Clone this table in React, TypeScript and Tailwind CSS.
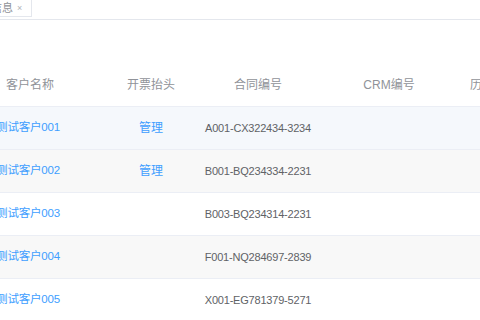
import React from "react";

const rows = [
  { name: "测试客户001", head: "管理", no: "A001-CX322434-3234", bg: "bg-[#f5f8fc]" },
  { name: "测试客户002", head: "管理", no: "B001-BQ234334-2231", bg: "bg-[#f8f8f8]" },
  { name: "测试客户003", head: "", no: "B003-BQ234314-2231", bg: "bg-white" },
  { name: "测试客户004", head: "", no: "F001-NQ284697-2839", bg: "bg-[#f8f8f8]" },
  { name: "测试客户005", head: "", no: "X001-EG781379-5271", bg: "bg-white" },
];

export default function App() {
  return (
    <div
      className="w-[480px] h-[320px] overflow-hidden bg-white text-[12px]"
      style={{ fontFamily: '"Liberation Sans", "Noto Sans CJK SC", sans-serif' }}
    >
      <div className="h-[20px] border-b border-[#e4e7ed] flex items-start">
        <div className="ml-[-40px] h-[17px] flex items-center gap-[4px] pl-[8px] pr-[9px] border border-t-0 border-[#e4e7ed] text-[11px] text-[#909399] leading-none">
          <span>客户信息</span>
          <span className="text-[9px] text-[#b0b3b8]">×</span>
        </div>
      </div>
      <div className="ml-[-40px] w-[560px] mt-[43px]">
        <div className="grid grid-cols-[140px_102px_112px_150px_56px] h-[44px] items-center border-b border-[#ebeef5] text-[#909399] whitespace-nowrap">
          <div className="text-center">客户名称</div>
          <div className="text-center">开票抬头</div>
          <div className="text-center">合同编号</div>
          <div className="text-center">CRM编号</div>
          <div className="text-left pl-[6px]">历史合同</div>
        </div>
        {rows.map((r) => (
          <div
            key={r.name}
            className={`grid grid-cols-[136px_110px_104px_154px_56px] h-[43px] items-center border-b border-[#ebeef5] whitespace-nowrap ${r.bg}`}
          >
            <div className="text-center text-[#409eff] text-[11.5px] tracking-[-0.2px]">{r.name}</div>
            <div className="text-center text-[#409eff]">{r.head}</div>
            <div className="flex justify-center text-[#606266] text-[11px] tracking-[-0.2px]">
              <span>{r.no}</span>
            </div>
            <div />
            <div />
          </div>
        ))}
      </div>
    </div>
  );
}
